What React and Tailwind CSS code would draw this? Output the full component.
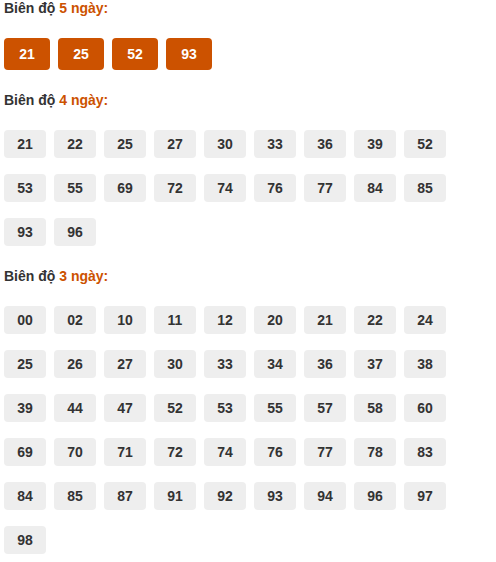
const s5 = ["21", "25", "52", "93"];
const s4 = ["21","22","25","27","30","33","36","39","52","53","55","69","72","74","76","77","84","85","93","96"];
const s3 = ["00","02","10","11","12","20","21","22","24","25","26","27","30","33","34","36","37","38","39","44","47","52","53","55","57","58","60","69","70","71","72","74","76","77","78","83","84","85","87","91","92","93","94","96","97","98"];

function Heading({ n }) {
  return (
    <div className="h-5 text-[14px] leading-5 font-bold text-[#333333]">
      Biên độ <span className="text-[#cc5200]">{n} ngày:</span>
    </div>
  );
}

export default function App() {
  return (
    <div className="-mt-[2px] w-[496px] px-1 font-['Liberation_Sans',Arial,sans-serif]">
      <Heading n={5} />
      <div className="mt-5 mb-5 flex flex-wrap gap-x-2 gap-y-4">
        {s5.map((v, i) => (
          <div key={i} className="flex h-8 w-[46px] items-center justify-center rounded bg-[#cc5200] text-[14px] font-bold text-white">
            {v}
          </div>
        ))}
      </div>
      <Heading n={4} />
      <div className="mt-5 mb-5 flex flex-wrap gap-x-2 gap-y-4">
        {s4.map((v, i) => (
          <div key={i} className="flex h-7 w-[42px] items-center justify-center rounded bg-[#eeeeee] text-[14px] font-bold text-[#333333]">
            {v}
          </div>
        ))}
      </div>
      <Heading n={3} />
      <div className="mt-5 mb-5 flex flex-wrap gap-x-2 gap-y-4">
        {s3.map((v, i) => (
          <div key={i} className="flex h-7 w-[42px] items-center justify-center rounded bg-[#eeeeee] text-[14px] font-bold text-[#333333]">
            {v}
          </div>
        ))}
      </div>
    </div>
  );
}
